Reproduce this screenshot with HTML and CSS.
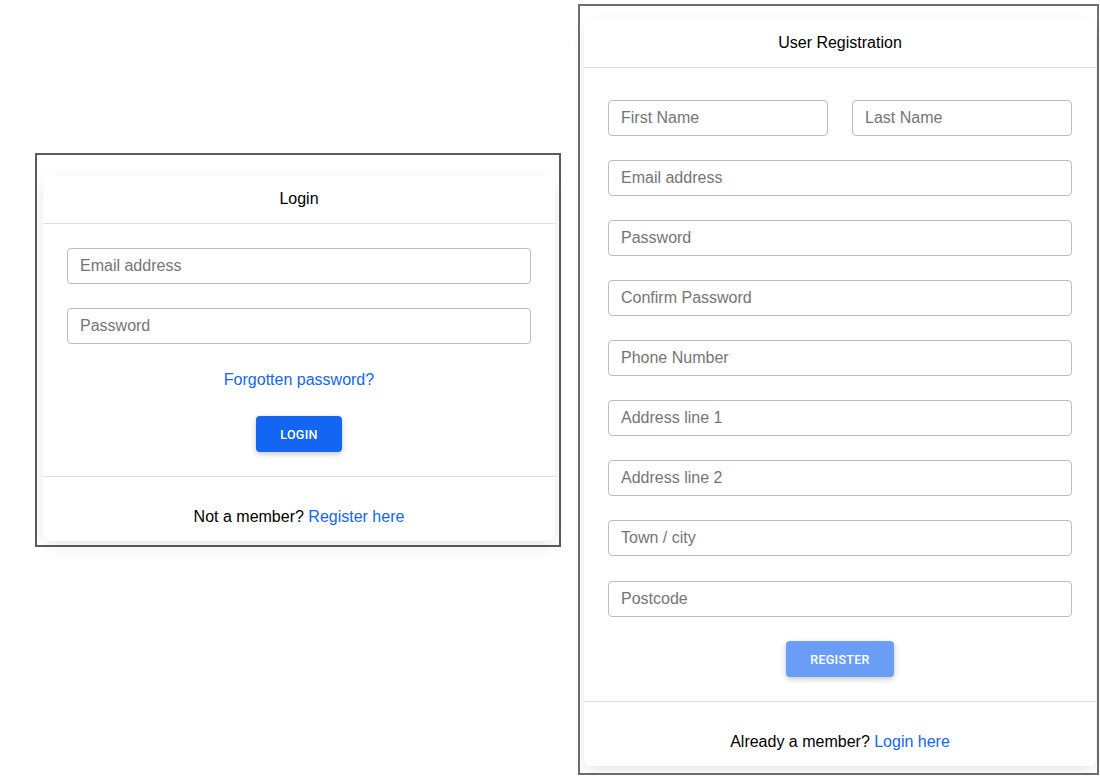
FILE: index.html
```html
<!DOCTYPE html>
<html lang="en">
<head>
<meta charset="utf-8">
<title>Login / Register</title>
<link rel="stylesheet" href="styles.css">
</head>
<body>
<div class="page">
  <section class="frame frame-login">
    <div class="card card-login">
      <div class="card-header">Login</div>
      <div class="card-body">
        <input class="field" type="email" placeholder="Email address">
        <input class="field" type="password" placeholder="Password">
        <div class="forgot"><a href="#">Forgotten password?</a></div>
        <div class="actions"><button class="btn" type="button">Login</button></div>
      </div>
      <div class="card-footer"><p>Not a member? <a href="#">Register here</a></p></div>
    </div>
  </section>

  <section class="frame frame-register">
    <div class="card card-register">
      <div class="card-header">User Registration</div>
      <div class="card-body body-register">
        <div class="row-2">
          <input class="field" type="text" placeholder="First Name">
          <input class="field" type="text" placeholder="Last Name">
        </div>
        <input class="field" type="email" placeholder="Email address">
        <input class="field" type="password" placeholder="Password">
        <input class="field" type="password" placeholder="Confirm Password">
        <input class="field" type="tel" placeholder="Phone Number">
        <input class="field" type="text" placeholder="Address line 1">
        <input class="field" type="text" placeholder="Address line 2">
        <input class="field" type="text" placeholder="Town / city">
        <input class="field field-last" type="text" placeholder="Postcode">
        <div class="actions"><button class="btn btn-disabled" type="button">Register</button></div>
      </div>
      <div class="card-footer"><p>Already a member? <a href="#">Login here</a></p></div>
    </div>
  </section>
</div>
</body>
</html>
```

FILE: styles.css
```css
* { box-sizing: border-box; }

html, body {
  margin: 0;
  padding: 0;
  background: #fff;
}

body {
  font-family: "Liberation Sans", Arial, sans-serif;
  font-size: 16px;
  line-height: 24px;
  color: #000;
}

.page {
  display: flex;
  align-items: flex-start;
  padding: 4px 0 0 35px;
}

.frame {
  border: 2px solid #5c5c5c;
  background: #fff;
}

.frame-login {
  width: 526px;
  margin-top: 149px;
  padding: 20px 0 4px 6px;
}

.frame-register {
  width: 521px;
  margin-left: 17px;
  padding: 13px 0 7px 4px;
  border-color: #6e6e6e;
}

.card {
  width: 512px;
  background: #fff;
  border-radius: 8px;
  box-shadow: 0 2px 15px -3px rgba(0, 0, 0, 0.09), 0 10px 20px -2px rgba(0, 0, 0, 0.05);
}

.card-header {
  height: 49px;
  padding: 12px 24px;
  text-align: center;
  border-bottom: 1px solid #e0e0e0;
}

.card-body {
  display: flex;
  flex-direction: column;
  padding: 24px 24px 24px 24px;
}

.body-register {
  padding-top: 32px;
}

.field {
  display: block;
  width: 100%;
  height: 36px;
  margin: 0 0 24px 0;
  padding: 0 12px;
  border: 1px solid #bdbdbd;
  border-radius: 4px;
  background: #fff;
  font-family: "Liberation Sans", Arial, sans-serif;
  font-size: 16px;
  color: #4f4f4f;
  outline: none;
}

.field-last {
  margin-top: 1px;
}

.field::placeholder {
  color: #757575;
  opacity: 1;
}

.row-2 {
  display: grid;
  grid-template-columns: 1fr 1fr;
  column-gap: 24px;
}

.forgot {
  text-align: center;
  line-height: 24px;
  margin-bottom: 24px;
}

a {
  color: #1266f1;
  text-decoration: none;
}

.actions {
  display: flex;
  justify-content: center;
}

.btn {
  height: 36px;
  padding: 0 24px;
  border: 0;
  border-radius: 4px;
  background: #1266f1;
  color: #fff;
  font-family: Roboto, "Liberation Sans", sans-serif;
  font-size: 12.5px;
  font-weight: 500;
  text-transform: uppercase;
  letter-spacing: 0.3px;
  box-shadow: 0 2px 5px 0 rgba(0, 0, 0, 0.16), 0 2px 10px 0 rgba(0, 0, 0, 0.08);
  cursor: pointer;
}

.btn-disabled {
  background: #6a9ef6;
}

.card-footer {
  border-top: 1px solid #e0e0e0;
  padding: 12px 24px;
  text-align: center;
}

.card-footer p {
  margin: 16px 0 0 0;
}
```
